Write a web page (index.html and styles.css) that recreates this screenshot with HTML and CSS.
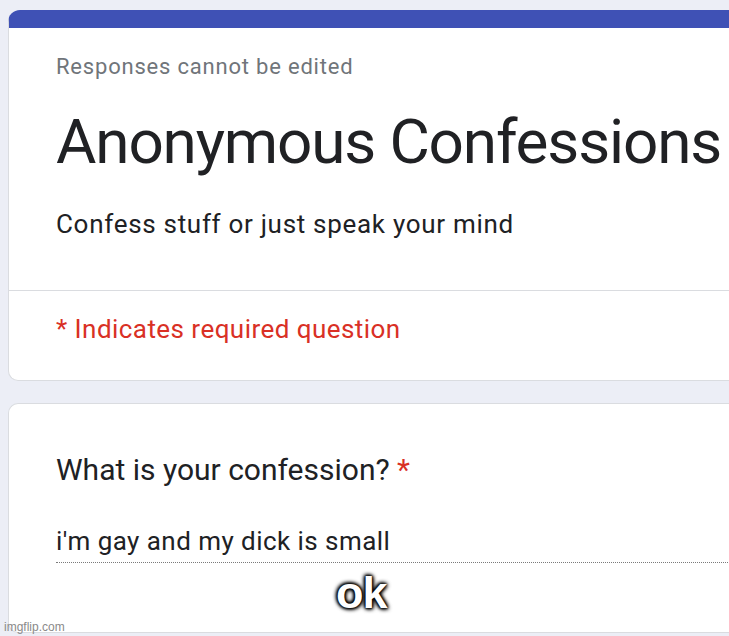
FILE: index.html
```html
<!DOCTYPE html>
<html lang="en">
<head>
    <meta charset="UTF-8">
    <title>Anonymous Confessions</title>
    <link rel="stylesheet" href="styles.css">
</head>
<body>
    <div class="form">
        <div class="card header-card">
            <div class="header-top">
                <div class="notice">Responses cannot be edited</div>
                <h1 class="title">Anonymous Confessions</h1>
                <div class="description">Confess stuff or just speak your mind</div>
            </div>
            <div class="required-note">* Indicates required question</div>
        </div>

        <div class="card question-card">
            <div class="question">What is your confession? <span class="star">*</span></div>
            <div class="answer">i'm gay and my dick is small</div>
            <div class="caption">ok</div>
        </div>
    </div>
    <div class="watermark">imgflip.com</div>
</body>
</html>
```

FILE: styles.css
```css
* {
    margin: 0;
    padding: 0;
    box-sizing: border-box;
}

body {
    font-family: Roboto, 'Noto Sans', sans-serif;
    background-color: #eceef6;
    color: #202124;
    width: 729px;
    height: 636px;
    overflow: hidden;
    position: relative;
}

.form {
    padding: 10px 0 0 8px;
    width: 760px;
}

.card {
    background-color: white;
    border: 1px solid #dadce0;
    border-right: none;
    border-radius: 10px 0 0 10px;
}

.header-card {
    border-top: 18px solid #3f51b5;
    border-radius: 12px 0 0 10px;
}

.header-top {
    padding: 25px 0 0 47px;
    height: 263px;
    border-bottom: 1px solid #dadce0;
}

.notice {
    font-size: 22px;
    color: #70757a;
    line-height: 28px;
    letter-spacing: 0.8px;
}

.title {
    font-size: 62px;
    font-weight: 400;
    line-height: 72px;
    margin-top: 25px;
    letter-spacing: -1.15px;
    white-space: nowrap;
}

.description {
    font-size: 26px;
    line-height: 32px;
    margin-top: 30px;
    letter-spacing: 0.7px;
}

.required-note {
    font-size: 26px;
    color: #d93025;
    padding: 23px 0 0 47px;
    height: 89px;
    letter-spacing: 0.45px;
}

.question-card {
    margin-top: 22px;
    height: 230px;
    padding: 48px 0 0 47px;
    position: relative;
}

.question {
    font-size: 30px;
    line-height: 36px;
}

.star {
    color: #d93025;
}

.answer {
    font-size: 26px;
    line-height: 32px;
    margin-top: 37px;
    padding-bottom: 5px;
    border-bottom: 1px dotted #7a7a7a;
    letter-spacing: 0.45px;
}

.caption {
    position: absolute;
    left: 327px;
    top: 163px;
    font-family: 'Liberation Sans', Arial, sans-serif;
    font-weight: bold;
    font-size: 45px;
    color: white;
    letter-spacing: -1px;
    text-shadow: 0 0 2px #000, 0 0 3px #000, 0 0 5px #000, 1px 1px 4px #000, -1px -1px 4px #000;
}

.watermark {
    position: absolute;
    left: 4px;
    bottom: 2px;
    font-family: 'Liberation Sans', Arial, sans-serif;
    font-size: 12px;
    color: #8a8a8a;
}
```
